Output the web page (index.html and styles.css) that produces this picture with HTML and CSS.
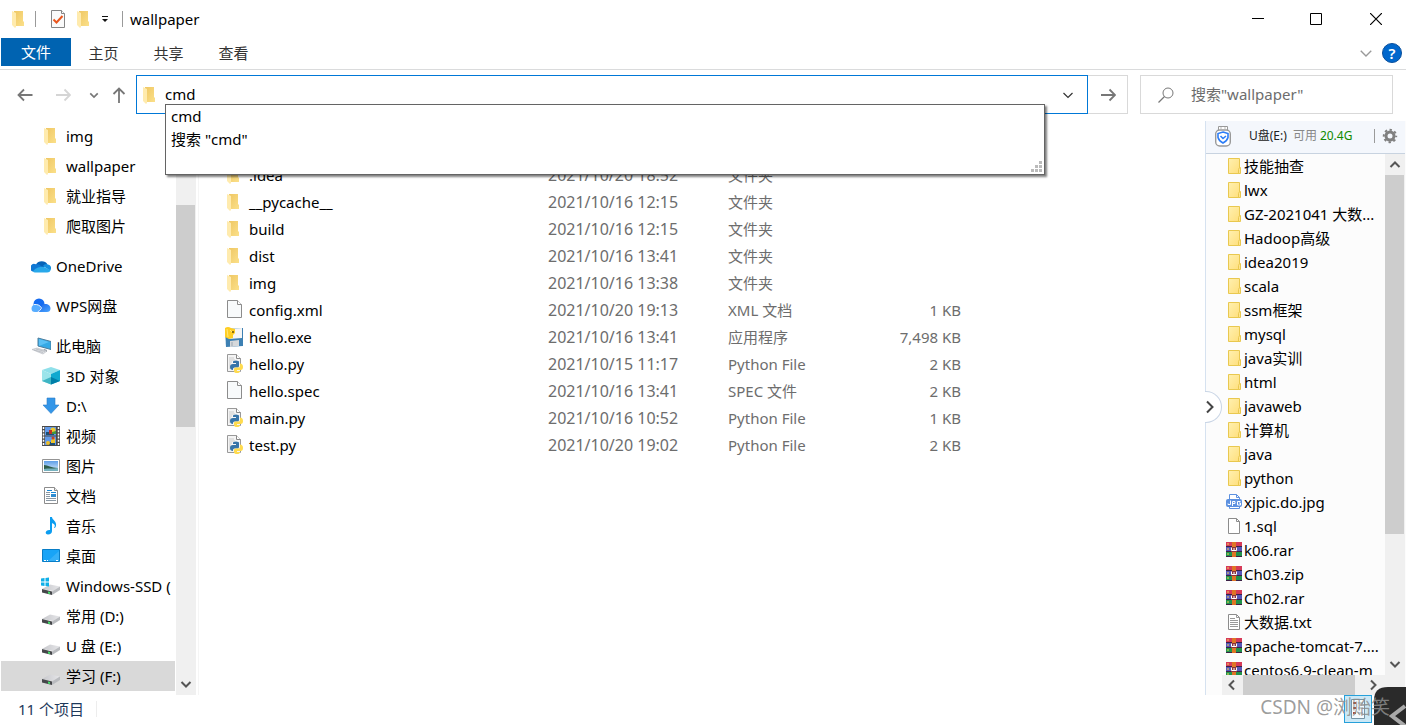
FILE: index.html
```html
<!DOCTYPE html>
<html lang="zh-CN">
<head>
<meta charset="utf-8">
<title>wallpaper</title>
<link rel="stylesheet" href="styles.css">
</head>
<body>
<svg class="sprite" aria-hidden="true">
  <defs>
    <linearGradient id="g-folder" x1="0" y1="0" x2="1" y2="1"><stop offset="0" stop-color="#efc763"/><stop offset="1" stop-color="#fbe08a"/></linearGradient>
    <linearGradient id="g-folder2" x1="0" y1="0" x2="1" y2="1"><stop offset="0" stop-color="#fff0b0"/><stop offset="1" stop-color="#ffdf7c"/></linearGradient>
    <linearGradient id="g-wps" x1="0" y1="0" x2="1" y2="1"><stop offset="0" stop-color="#1560e8"/><stop offset="1" stop-color="#4aa5ff"/></linearGradient>
    <linearGradient id="g-photo" x1="0" y1="0" x2="0" y2="1"><stop offset="0" stop-color="#5e9ee8"/><stop offset="1" stop-color="#dceefc"/></linearGradient>
    <linearGradient id="g-drive" x1="0" y1="0" x2="1" y2="0"><stop offset="0" stop-color="#c6c7cb"/><stop offset="1" stop-color="#e6e6e9"/></linearGradient>
  </defs>
  <symbol id="folder" viewBox="0 0 20 20"><path d="M5 2h9v10l1 1v4H5z" fill="url(#g-folder)"/><path d="M3 2l4 2v14l-1 1-3-3z" fill="#ffebae"/></symbol>
  <symbol id="folder-flat" viewBox="0 0 16 18"><path d="M2.500 1.500h11v15h-11z" fill="url(#g-folder2)" stroke="#e9c84f"/><path d="M12.500 16.500v-4l1-2h1v6z" fill="#ffe48f" stroke="#e9c84f"/></symbol>
  <symbol id="onedrive" viewBox="0 0 20 20"><path d="M5 8.500a6.500 6 0 0 1 11.500 0L10 13z" fill="#0764b8"/><path d="M1.500 15.500A4 4 0 0 1 5 8.300a5 5 0 0 1 4 .7l6 6.500z" fill="#0f78d4"/><path d="M12 10a4 4 0 0 1 5-1.500 3.500 3.500 0 0 1 2 6z" fill="#1690df"/><path d="M2 15.500c1.500-3 7-5.500 11-4.500l6.500 3q-.5 2.500-3.500 2.500H4q-1.500 0-2-1z" fill="#28a8ea"/></symbol>
  <symbol id="wps" viewBox="0 0 20 20"><circle cx="8" cy="8" r="5.500" fill="#146bf0"/><path d="M.5 12.500a4 4 0 0 1 4.500-4q4 0 5 3.500l-3 4H4a3.500 3.500 0 0 1-3.500-3.500z" fill="#57adff"/><path d="M6 16c4-1 3-8 8-8 3.500 0 5.500 2 5.500 4.500S18 16 16 16z" fill="url(#g-wps)"/><path d="M3 8.500q5.500-.5 7.500 3.500-1.500 3-4 4" fill="none" stroke="#fff" stroke-width=".9"/></symbol>
  <symbol id="pc" viewBox="0 0 20 20"><path d="M7 2l13 3.500v8L7 10z" fill="#35a9e6" stroke="#4d7c9b"/><path d="M8 3l10 3-10 4z" fill="#6ccafb" opacity=".7"/><path d="M13 13l3 1v2l-4-1z" fill="#8d969d"/><path d="M1 13.500l5-1.500 10 3-4 3z" fill="#dde0e4" stroke="#b3b7bd" stroke-width=".6"/><path d="M3 14l9 2.500M5 13l9 2.500" stroke="#a9adb3" stroke-width=".6"/></symbol>
  <symbol id="cube" viewBox="0 0 20 20"><path d="M1 4l9-3 9 3-9 4z" fill="#8fe0ea"/><path d="M1 4l9 4v10.500L1 15z" fill="#9be4ea"/><path d="M19 4l-9 4v10.500l9-3.500z" fill="#10a9cf"/><path d="M1 15l9-4v7.500z" fill="#3fb5c4"/><path d="M10 11l9 4-9 3.500z" fill="#007fa8"/></symbol>
  <symbol id="down" viewBox="0 0 20 20"><path d="M6 2h8v7h4l-8 8.500L2 9h4z" fill="#3396e8" stroke="#2b7cc7" stroke-width=".6"/></symbol>
  <symbol id="film" viewBox="0 0 20 20"><path d="M1 0h18v20H1z" fill="#4a4a4a"/><path d="M4 1h11v8.500H4zM4 10.500h11V19H4z" fill="#6199e8"/><path d="M2.500 1v18M17.500 1v18" stroke="#fff" stroke-width="1.500" stroke-dasharray="2 1.200"/><path d="M5 6h8v3H5zm1 10h8v3H6z" fill="#1e4e72"/><circle cx="12" cy="4" r="2.500" fill="#efc82a"/><path d="M8 4h3v4H8z" fill="#bf3324"/><path d="M11 6l4-1v3h-4z" fill="#409642"/><circle cx="7" cy="17" r="2" fill="#efbe2a"/><path d="M10 14l4-2v5h-4z" fill="#edc329"/><circle cx="12" cy="12" r="1.500" fill="#c84125"/></symbol>
  <symbol id="photo" viewBox="0 0 20 20"><path d="M1.500 3.500h17v13h-17z" fill="#fff" stroke="#949494"/><path d="M3 5h14v10H3z" fill="url(#g-photo)"/><path d="M3 9c4 0 7 3 14 3v1.500H3z" fill="#2e5d4b"/><path d="M3 13c4-1 8 0 14-1v3H3z" fill="#76b2bf"/></symbol>
  <symbol id="doc" viewBox="0 0 20 20"><path d="M3.500 1.500h10l3 3v13h-13z" fill="#fff" stroke="#8c8c8c"/><path d="M13.500 1.500v3h3" fill="#eee" stroke="#8c8c8c"/><path d="M5 6.500h4M5 8.500h4M5 10.500h4M5 12.500h10M5 14.500h10" stroke="#8a98a4"/><path d="M6 4.500h5M10 6.500h5" stroke="#1688d8"/><path d="M10 8h5v3h-5z" fill="#2d8bd0"/></symbol>
  <symbol id="music" viewBox="0 0 20 20"><path d="M9 1h2c0 3 5 4 4 9-1 2-1 2-2 2 2-3 0-4-2-5v8c0 2-1.500 3.500-4 3.500-3.500 0-3-5 2-4.500z" fill="#0c9df0"/></symbol>
  <symbol id="desktop" viewBox="0 0 20 20"><path d="M1.500 3.500h17v12h-17z" fill="#18a4f7" stroke="#087dc6"/><path d="M7 15L18 5v10z" fill="#52bcfa" opacity=".5"/><path d="M3 14.500h2m1 0h1m8 0h2" stroke="#fff"/></symbol>
  <symbol id="drive" viewBox="0 0 20 20"><path d="M1 13l8-4.500 10 2-7 4.500z" fill="url(#g-drive)"/><path d="M1 13l10 2.500V19L1 16.500z" fill="#45474a"/><path d="M11 15.500l8-5v3.500l-8 5z" fill="#b9bbbf"/><path d="M7 15.500l2 .5v2l-2-.5z" fill="#45e36b"/></symbol>
  <symbol id="windrive" viewBox="0 0 20 20"><use href="#drive"/><path d="M0 2.500l3.500-.5v3.500H0zM4.500 2L8 1.500v4H4.500zM0 6.500h3.500V10L0 9.600zM4.500 6.500H8v4l-3.500-.4z" fill="#0eafe8"/></symbol>
  <symbol id="page" viewBox="0 0 20 20"><path d="M3.500.5h10l4 4v13h-14z" fill="#f8fafb" stroke="#8c8c8c"/><path d="M13.500.5v4h4" fill="#fff" stroke="#8c8c8c"/></symbol>
  <symbol id="lines" viewBox="0 0 16 18"><path d="M2.500 1.500h8l3 3v12h-11z" fill="#fff" stroke="#8c8c8c"/><path d="M10.500 1.500v3h3M4 5.500h5M4 7.500h8M4 9.500h8M4 11.500h8M4 13.500h8" fill="none" stroke="#999"/></symbol>
  <symbol id="blank" viewBox="0 0 16 18"><path d="M2.500 1.500h8l3 3v12h-11z" fill="#fff" stroke="#8c8c8c"/><path d="M10.500 1.500v3h3" fill="none" stroke="#8c8c8c"/></symbol>
  <symbol id="py" viewBox="0 0 20 20"><path d="M3.500.5h9l4 4v13h-13z" fill="#f4f4f4" stroke="#999"/><path d="M12.500.5v4h4" fill="#fff" stroke="#888"/><path d="M5 4h5M5 6h6M5 8h3M5 10h2M5 12h2M5 14h2" stroke="#ccc"/><path d="M9 8q0-1.500 3-1.500t3 1.500v4q0 1.500-1.500 1.500h-3Q9 13.500 9 15v1q-3 0-3-3t3-3h3V9H9z" fill="#3774a8"/><path d="M16 9.500q3 0 3 3.500t-3 3h-3v1h3q0 2-3 2t-3-2v-2q0-1.500 1.500-1.500h3Q16 13.500 16 12z" fill="#ffdb4e"/></symbol>
  <symbol id="exe" viewBox="0 0 20 20"><path d="M1 2l18-1v18l-17 1z" fill="#3d80b3"/><path d="M4 2l14-1v10l-13 1z" fill="#f5f5f5"/><path d="M6 14l9-1v6l-9 1z" fill="#d6d8da"/><path d="M7 15h2v4H7z" fill="#b8bfc6"/><path d="M1 1q3-2 6 0l4 1v4L9 8v3l-4 1-4-2z" fill="#ffce23"/><path d="M3 2l1 8M6 3l2 2" fill="none" stroke="#ffe778"/><circle cx="9" cy="5" r="1" fill="#695000"/></symbol>
  <symbol id="rar" viewBox="0 0 16 18"><path d="M0 1h16v5H0z" fill="#d63a58"/><path d="M0 6h16v5H0z" fill="#5555b8"/><path d="M0 11h16v5H0z" fill="#21924b"/><path d="M0 5.500h16M0 10.500h16M0 15.500h16" stroke="#3c2145"/><path d="M2 2v2m0 3v2m0 3v2" stroke="#f3d552"/><path d="M6 1h4v15H6z" fill="#df7524"/><path d="M5 6h6v5H5z" fill="#8c343b"/><path d="M5.500 6.500v3h5v-3M8 7v3" fill="none" stroke="#fff"/></symbol>
  <symbol id="jpg" viewBox="0 0 16 18"><path d="M3.500 1.500h7l3 3v11h-10z" fill="#fff" stroke="#5d91e0"/><path d="M10.500 1.500v3h3" fill="none" stroke="#5d91e0"/><rect y="6" width="16" height="8" rx="2" fill="#5d91e0"/><path d="M4.500 7.500v4H2v-1M6.500 13V8.500H9v2H6.500M14.500 8.500h-3V12h3v-2H13" fill="none" stroke="#fff"/></symbol>
  <symbol id="chev-d" viewBox="0 0 12 12"><path d="M1.500 4L6 8.500 10.500 4" fill="none" stroke="currentColor" stroke-width="var(--sw, 1.200)"/></symbol>
  <symbol id="chev-u" viewBox="0 0 12 12"><path d="M1.500 8L6 3.500 10.500 8" fill="none" stroke="currentColor" stroke-width="2"/></symbol>
  <symbol id="chev-l" viewBox="0 0 12 12"><path d="M8 1.500L3.500 6 8 10.500" fill="none" stroke="currentColor" stroke-width="2"/></symbol>
  <symbol id="chev-r" viewBox="0 0 12 12"><path d="M4 1.500L8.500 6 4 10.500" fill="none" stroke="currentColor" stroke-width="2"/></symbol>
  <symbol id="arrow-r" viewBox="0 0 16 16"><path d="M1 8h14M9.500 2.500L15 8l-5.500 5.500" fill="none" stroke="currentColor" stroke-width="var(--sw, 1.800)"/></symbol>
  <symbol id="arrow-l" viewBox="0 0 16 16"><path d="M15.500 8H1.500M7 2.500L1.500 8 7 13.500" fill="none" stroke="currentColor" stroke-width="1.800"/></symbol>
  <symbol id="arrow-u" viewBox="0 0 16 16"><path d="M8 16V2M2.500 7L8 1.500 13.500 7" fill="none" stroke="currentColor" stroke-width="1.800"/></symbol>
</svg>

<div class="window">
  <header class="titlebar">
    <svg class="i20"><use href="#folder"/></svg>
    <span class="rule rule-a"></span>
    <button class="plain" aria-label="属性"><svg class="i20" viewBox="0 0 20 20"><path d="M3.500 1.500h10l3 3v14h-13z" fill="#fafafa" stroke="#858585"/><path d="M13.500 1.500v3h3" fill="#fff" stroke="#858585"/><path d="M5.500 10.500l3 3 6-6.500" fill="none" stroke="#e9561e" stroke-width="2"/></svg></button>
    <button class="plain new-folder" aria-label="新建文件夹"><svg class="i20"><use href="#folder"/></svg></button>
    <button class="plain customize" aria-label="自定义快速访问工具栏"><svg width="8" height="8" viewBox="0 0 8 8"><path d="M1 1.500h6" stroke="#111"/><path d="M1 4h6L4 7z" fill="#111"/></svg></button>
    <span class="rule rule-b"></span>
    <h1>wallpaper</h1>
    <div class="caption">
      <button aria-label="最小化"><svg width="12" height="12" viewBox="0 0 12 12"><path d="M0 5.500h12" stroke="#000"/></svg></button>
      <button aria-label="最大化"><svg width="12" height="12" viewBox="0 0 12 12"><path d="M.5.5h11v11H.5z" fill="none" stroke="#000"/></svg></button>
      <button aria-label="关闭"><svg width="12" height="12" viewBox="0 0 12 12"><path d="M0 0l12 12M12 0L0 12" stroke="#000" stroke-width="1.200"/></svg></button>
    </div>
  </header>

  <nav class="ribbon">
    <button class="tab tab-file">文件</button>
    <button class="tab">主页</button>
    <button class="tab">共享</button>
    <button class="tab">查看</button>
    <button class="plain expand" aria-label="展开功能区"><svg width="14" height="14"><use href="#chev-d"/></svg></button>
    <button class="help" aria-label="帮助">?</button>
  </nav>

  <div class="toolbar">
    <div class="history">
      <button class="plain" aria-label="后退"><svg width="16" height="16"><use href="#arrow-l"/></svg></button>
      <button class="plain forward" aria-label="前进"><svg width="16" height="16"><use href="#arrow-r"/></svg></button>
      <button class="plain recent" aria-label="最近位置"><svg width="10" height="10"><use href="#chev-d"/></svg></button>
      <button class="plain" aria-label="上移"><svg width="16" height="16"><use href="#arrow-u"/></svg></button>
    </div>
    <div class="address">
      <svg class="i20"><use href="#folder"/></svg>
      <input type="text" value="cmd" aria-label="地址">
      <button class="plain open" aria-label="以前的位置"><svg width="12" height="12"><use href="#chev-d"/></svg></button>
      <div class="suggest">
        <a href="#cmd">cmd</a>
        <a href="#search">搜索 "cmd"</a>
        <svg class="grip" width="12" height="12" viewBox="0 0 12 12"><path d="M8 0h3v3H8zM4 4h3v3H4zM8 4h3v3H8zM0 8h3v3H0zM4 8h3v3H4zM8 8h3v3H8z" fill="#bbb"/></svg>
      </div>
    </div>
    <button class="go" aria-label="转到"><svg width="16" height="16"><use href="#arrow-r"/></svg></button>
    <label class="search">
      <svg width="16" height="16" viewBox="0 0 16 16"><circle cx="10" cy="6" r="5" fill="none" stroke="#777"/><path d="M6.500 9.500L.5 15.500" stroke="#777" stroke-width="1.200"/></svg>
      <input type="text" placeholder='搜索"wallpaper"' aria-label="搜索">
    </label>
  </div>

  <div class="body">
    <aside class="side">
      <nav class="tree">
        <a class="sub" href="#"><svg class="i20"><use href="#folder"/></svg>img</a>
        <a class="sub" href="#"><svg class="i20"><use href="#folder"/></svg>wallpaper</a>
        <a class="sub" href="#"><svg class="i20"><use href="#folder"/></svg>就业指导</a>
        <a class="sub" href="#"><svg class="i20"><use href="#folder"/></svg>爬取图片</a>
        <a class="root" href="#"><svg class="i20"><use href="#onedrive"/></svg>OneDrive</a>
        <a class="root" href="#"><svg class="i20"><use href="#wps"/></svg>WPS网盘</a>
        <a class="root" href="#"><svg class="i20"><use href="#pc"/></svg>此电脑</a>
        <a class="sub" href="#"><svg class="i20"><use href="#cube"/></svg>3D 对象</a>
        <a class="sub" href="#"><svg class="i20"><use href="#down"/></svg>D:\</a>
        <a class="sub" href="#"><svg class="i20"><use href="#film"/></svg>视频</a>
        <a class="sub" href="#"><svg class="i20"><use href="#photo"/></svg>图片</a>
        <a class="sub" href="#"><svg class="i20"><use href="#doc"/></svg>文档</a>
        <a class="sub" href="#"><svg class="i20"><use href="#music"/></svg>音乐</a>
        <a class="sub" href="#"><svg class="i20"><use href="#desktop"/></svg>桌面</a>
        <a class="sub" href="#"><svg class="i20"><use href="#windrive"/></svg>Windows-SSD (</a>
        <a class="sub" href="#"><svg class="i20"><use href="#drive"/></svg>常用 (D:)</a>
        <a class="sub" href="#"><svg class="i20"><use href="#drive"/></svg>U 盘 (E:)</a>
        <a class="sub current" href="#"><svg class="i20"><use href="#drive"/></svg>学习 (F:)</a>
      </nav>
      <div class="vbar">
        <svg width="12" height="12"><use href="#chev-u"/></svg>
        <div class="track"><span class="thumb thumb-side"></span></div>
        <svg width="12" height="12"><use href="#chev-d"/></svg>
      </div>
    </aside>

    <main class="files">
      <table>
        <colgroup><col class="c-name"><col class="c-date"><col class="c-type"><col class="c-size"></colgroup>
        <tbody>
          <tr><td><span class="file"><svg class="i20"><use href="#folder"/></svg>.idea</span></td><td class="date">2021/10/20 18:52</td><td>文件夹</td><td></td></tr>
          <tr><td><span class="file"><svg class="i20"><use href="#folder"/></svg>__pycache__</span></td><td class="date">2021/10/16 12:15</td><td>文件夹</td><td></td></tr>
          <tr><td><span class="file"><svg class="i20"><use href="#folder"/></svg>build</span></td><td class="date">2021/10/16 12:15</td><td>文件夹</td><td></td></tr>
          <tr><td><span class="file"><svg class="i20"><use href="#folder"/></svg>dist</span></td><td class="date">2021/10/16 13:41</td><td>文件夹</td><td></td></tr>
          <tr><td><span class="file"><svg class="i20"><use href="#folder"/></svg>img</span></td><td class="date">2021/10/16 13:38</td><td>文件夹</td><td></td></tr>
          <tr><td><span class="file"><svg class="i20"><use href="#page"/></svg>config.xml</span></td><td class="date">2021/10/20 19:13</td><td>XML 文档</td><td>1 KB</td></tr>
          <tr><td><span class="file"><svg class="i20"><use href="#exe"/></svg>hello.exe</span></td><td class="date">2021/10/16 13:41</td><td>应用程序</td><td>7,498 KB</td></tr>
          <tr><td><span class="file"><svg class="i20"><use href="#py"/></svg>hello.py</span></td><td class="date">2021/10/15 11:17</td><td>Python File</td><td>2 KB</td></tr>
          <tr><td><span class="file"><svg class="i20"><use href="#page"/></svg>hello.spec</span></td><td class="date">2021/10/16 13:41</td><td>SPEC 文件</td><td>2 KB</td></tr>
          <tr><td><span class="file"><svg class="i20"><use href="#py"/></svg>main.py</span></td><td class="date">2021/10/16 10:52</td><td>Python File</td><td>1 KB</td></tr>
          <tr><td><span class="file"><svg class="i20"><use href="#py"/></svg>test.py</span></td><td class="date">2021/10/20 19:02</td><td>Python File</td><td>2 KB</td></tr>
        </tbody>
      </table>
    </main>

    <aside class="usb">
      <div class="usb-head">
        <svg width="16" height="22" viewBox="0 0 16 22"><path d="M3.500 5V1.500h9V5" fill="#fff" stroke="#999"/><path d="M5.500 3h1m3 0h1" stroke="#777"/><rect x=".7" y="5" width="14.600" height="16" rx="4" fill="#fff" stroke="#999" stroke-width="1.400"/><path d="M8 7l5 1.500v4Q12 16 8 18q-4-2-5-5.500v-4z" fill="none" stroke="#2c7df7" stroke-width="1.600"/><path d="M5.500 11L8 13.500 11 11" fill="none" stroke="#2c7df7" stroke-width="1.600"/></svg>
        <span class="usb-title">U盘(E:)</span>
        <span class="usb-label">可用</span>
        <span class="usb-free">20.4G</span>
        <span class="rule usb-rule"></span>
        <button class="plain" aria-label="设置"><svg width="16" height="16" viewBox="0 0 16 16"><circle cx="8" cy="8" r="4" fill="none" stroke="#808080" stroke-width="3"/><circle cx="8" cy="8" r="6.200" fill="none" stroke="#808080" stroke-width="2" stroke-dasharray="2.400 2.470" stroke-dashoffset="1.200"/></svg></button>
      </div>
      <div class="usb-body">
        <div class="usb-col">
          <nav class="usb-list">
            <a href="#"><svg class="i16"><use href="#folder-flat"/></svg>技能抽查</a>
            <a href="#"><svg class="i16"><use href="#folder-flat"/></svg>lwx</a>
            <a href="#"><svg class="i16"><use href="#folder-flat"/></svg>GZ-2021041 大数...</a>
            <a href="#"><svg class="i16"><use href="#folder-flat"/></svg>Hadoop高级</a>
            <a href="#"><svg class="i16"><use href="#folder-flat"/></svg>idea2019</a>
            <a href="#"><svg class="i16"><use href="#folder-flat"/></svg>scala</a>
            <a href="#"><svg class="i16"><use href="#folder-flat"/></svg>ssm框架</a>
            <a href="#"><svg class="i16"><use href="#folder-flat"/></svg>mysql</a>
            <a href="#"><svg class="i16"><use href="#folder-flat"/></svg>java实训</a>
            <a href="#"><svg class="i16"><use href="#folder-flat"/></svg>html</a>
            <a href="#"><svg class="i16"><use href="#folder-flat"/></svg>javaweb</a>
            <a href="#"><svg class="i16"><use href="#folder-flat"/></svg>计算机</a>
            <a href="#"><svg class="i16"><use href="#folder-flat"/></svg>java</a>
            <a href="#"><svg class="i16"><use href="#folder-flat"/></svg>python</a>
            <a href="#"><svg class="i16"><use href="#jpg"/></svg>xjpic.do.jpg</a>
            <a href="#"><svg class="i16"><use href="#blank"/></svg>1.sql</a>
            <a href="#"><svg class="i16"><use href="#rar"/></svg>k06.rar</a>
            <a href="#"><svg class="i16"><use href="#rar"/></svg>Ch03.zip</a>
            <a href="#"><svg class="i16"><use href="#rar"/></svg>Ch02.rar</a>
            <a href="#"><svg class="i16"><use href="#lines"/></svg>大数据.txt</a>
            <a href="#"><svg class="i16"><use href="#rar"/></svg>apache-tomcat-7....</a>
            <a href="#"><svg class="i16"><use href="#rar"/></svg>centos6.9-clean-m</a>
          </nav>
          <div class="hbar">
            <svg width="12" height="12"><use href="#chev-l"/></svg>
            <span class="thumb thumb-h"></span>
            <svg width="12" height="12"><use href="#chev-r"/></svg>
          </div>
        </div>
        <div class="vbar vbar-usb">
          <svg width="12" height="12"><use href="#chev-u"/></svg>
          <div class="track"><span class="thumb thumb-usb"></span></div>
          <svg width="12" height="12"><use href="#chev-d"/></svg>
        </div>
      </div>
      <button class="collapse" aria-label="收起"><svg width="12" height="14" viewBox="0 0 12 14"><path d="M2 1.500L7.500 7 2 12.500" fill="none" stroke="currentColor" stroke-width="2"/></svg></button>
    </aside>
  </div>

  <footer class="status">
    <span>11 个项目</span>
    <span class="rule status-rule"></span>
    <button class="view" aria-label="详细信息"><svg width="16" height="20" viewBox="0 0 16 20"><path d="M1.500.5h13v19h-13z" fill="#f5fafd" stroke="#7593a5"/><path d="M3 4h3M3 9h3M3 14h3" stroke="#a65139" stroke-width="2"/><path d="M8 4h5M8 9h5M8 14h5" stroke="#8da2ae"/></svg></button>
    <div class="corner"><svg width="32" height="38" viewBox="0 0 32 38"><path d="M0 38V13Q0 0 14 0h18v38z" fill="#2a2a2a"/><path d="M31 19L18 29l13 10" fill="none" stroke="#aaa" stroke-width="4"/></svg></div>
    <div class="watermark">CSDN @浏贻笑</div>
  </footer>
</div>
</body>
</html>
```
FILE: styles.css
```css
* { box-sizing: border-box; }

body {
  margin: 0;
  background: #fff;
  color: #000;
  font: 15px/20px "Noto Sans", "Noto Sans CJK SC", sans-serif;
}

button, input { font: inherit; color: inherit; margin: 0; }
a { color: inherit; text-decoration: none; }
svg { display: block; flex: none; }

.sprite { position: absolute; width: 0; height: 0; }
.i20 { width: 20px; height: 20px; }
.i16 { width: 16px; height: 18px; }
.plain { border: 0; padding: 0; background: none; }
.rule { width: 1px; height: 16px; background: #9a9a9a; }

.window {
  display: flex;
  flex-direction: column;
  height: 100vh;
  overflow: hidden;
}

/* Title bar */
.titlebar {
  display: flex;
  align-items: center;
  flex: none;
  height: 38px;
  padding-left: 9px;
}
.titlebar h1 { margin: 0; font-size: 15px; font-weight: 400; }
.rule-a { margin: 0 12px 0 6px; }
.new-folder { margin-left: 6px; }
.customize { margin-left: 7px; }
.rule-b { margin: 0 7px 0 13px; }
.caption { display: flex; margin-left: auto; }
.caption button {
  display: grid;
  place-items: center;
  width: 58px;
  height: 38px;
  border: 0;
  padding: 0;
  background: none;
}
.caption button:last-child { width: 61px; }

/* Ribbon tabs */
.ribbon {
  display: flex;
  align-items: center;
  flex: none;
  height: 32px;
  padding: 0 4px 2px 1px;
  border-bottom: 1px solid #dadbdc;
}
.tab {
  width: 65px;
  height: 28px;
  border: 0;
  padding: 0;
  background: none;
  color: #333;
}
.tab-file {
  align-self: flex-start;
  width: 70px;
  background: #0063b1;
  color: #fff;
}
.expand { margin-left: auto; color: #999; }
.help {
  width: 20px;
  height: 20px;
  margin-left: 9px;
  border: 1px solid #0a4f9c;
  border-radius: 50%;
  padding: 0;
  background: #0067cc;
  color: #fff;
  font-weight: 600;
  line-height: 16px;
}

/* Address row */
.toolbar {
  display: flex;
  flex: none;
  height: 51px;
  padding: 5px 13px 7px 17px;
}
.history {
  display: flex;
  align-items: center;
  width: 119px;
  color: #777;
}
.forward { margin-left: 22px; color: #d5d5d5; }
.recent { margin: 0 12px 0 18px; --sw: 2; }
.address {
  position: relative;
  display: flex;
  align-items: center;
  flex: 1;
  min-width: 0;
  border: 1px solid #0078d7;
  padding: 0 13px 0 3px;
}
.address input {
  flex: 1;
  min-width: 0;
  border: 0;
  outline: 0;
  padding: 0 5px 2px;
  background: none;
}
.open { color: #333; }
.suggest {
  position: absolute;
  z-index: 5;
  top: 28px;
  left: 28px;
  right: 42px;
  height: 71px;
  border: 1px solid #646464;
  background: #fff;
  box-shadow: 2px 2px 2px rgba(0, 0, 0, .5);
}
.suggest a {
  display: block;
  padding-left: 5px;
  line-height: 23px;
}
.grip { position: absolute; right: 1px; bottom: 1px; }
.go {
  display: grid;
  place-items: center;
  width: 40px;
  border: 1px solid #d9d9d9;
  border-left: 0;
  padding: 0;
  background: #fff;
  color: #777;
}
.search {
  display: flex;
  align-items: center;
  width: 253px;
  margin-left: 12px;
  border: 1px solid #d9d9d9;
  padding-left: 17px;
}
.search input {
  flex: 1;
  min-width: 0;
  border: 0;
  outline: 0;
  padding: 0 17px 2px;
  background: none;
}
.search input::placeholder { color: #6d6d6d; opacity: 1; }

/* Content */
.body { display: flex; flex: 1; min-height: 0; }

.side {
  display: flex;
  width: 199px;
  padding: 0 2px 0 1px;
  border-right: 1px solid #f5f5f5;
}
.tree { flex: 1; min-width: 0; padding-right: 1px; overflow: hidden; }
.tree a {
  display: flex;
  align-items: center;
  gap: 5px;
  height: 30px;
  white-space: nowrap;
}
.tree .sub { padding-left: 40px; }
.tree .root { margin-top: 10px; padding-left: 30px; }
.tree .current { background: #d9d9d9; }

.vbar {
  display: flex;
  flex-direction: column;
  align-items: center;
  flex: none;
  width: 20px;
  padding: 5px 0;
  background: #f0f0f0;
  color: #555;
  --sw: 2;
}
.track { flex: 1; width: 100%; padding: 4px 1px 4px 0; }
.thumb { display: block; background: #cdcdcd; }
.thumb-side { height: 222px; margin-top: 63px; }

.files { flex: 1; min-width: 0; padding: 40px 0 0 25px; overflow: hidden; }
.files table {
  width: 737px;
  border-collapse: collapse;
  table-layout: fixed;
  color: #6d6d6d;
}
.c-name { width: 324px; }
.c-date { width: 180px; }
.c-type { width: 120px; }
.files td { height: 27px; padding: 0; white-space: nowrap; }
.files td:last-child { text-align: right; }
.files .date { font-size: 16px; }
.file { display: flex; align-items: center; gap: 5px; color: #000; }

/* USB panel */
.usb {
  position: relative;
  display: flex;
  flex-direction: column;
  width: 201px;
  border-left: 1px solid #d6e2f0;
  padding-right: 1px;
  background: #fcfcfc;
}
.usb-head {
  display: flex;
  align-items: center;
  flex: none;
  height: 33px;
  padding: 0 7px 2px 9px;
  border-bottom: 1px solid #c8d3e0;
  background: #f4f7fc;
  font-size: 12px;
}
.usb-title { margin-left: 18px; color: #222; }
.usb-label { margin-left: 6px; color: #888; }
.usb-free { margin-left: 3px; color: #108a00; }
.usb-rule { height: 14px; margin: 0 7px 0 auto; }
.usb-body { display: flex; flex: 1; min-height: 0; }
.usb-col { display: flex; flex-direction: column; flex: 1; min-width: 0; padding-left: 16px; }
.usb-list { flex: 1; min-height: 0; overflow: hidden; padding-left: 4px; }
.usb-list a {
  display: flex;
  align-items: center;
  gap: 2px;
  height: 24px;
  white-space: nowrap;
}
.hbar {
  display: flex;
  align-items: center;
  flex: none;
  height: 20px;
  padding: 0 6px 0 4px;
  background: #f0f0f0;
  color: #555;
}
.thumb-h { width: 112px; height: 20px; margin: 0 auto 0 5px; }
.vbar-usb { padding: 5px 0 25px; }
.thumb-usb { height: 359px; }
.collapse {
  position: absolute;
  top: 270px;
  left: -1px;
  display: flex;
  align-items: center;
  width: 17px;
  height: 32px;
  border: 1px solid #c9d5e5;
  border-left: 0;
  border-radius: 0 16px 16px 0;
  padding: 0;
  background: #fff;
  color: #444;
}

/* Status bar */
.status {
  position: relative;
  display: flex;
  align-items: center;
  flex: none;
  height: 30px;
  padding: 0 34px 2px 18px;
  color: #1e395b;
}
.status-rule { margin-left: 12px; background: #ededed; }
.view {
  display: grid;
  place-items: center;
  width: 28px;
  height: 28px;
  margin-left: auto;
  border: 1px solid #26a0da;
  padding: 0;
  background: #cbe8f6;
}
.corner { position: absolute; right: 0; bottom: 0; }
.watermark {
  position: absolute;
  right: 16px;
  bottom: 4px;
  color: rgba(140, 140, 140, .85);
  font-size: 19px;
  line-height: 28px;
}
```
